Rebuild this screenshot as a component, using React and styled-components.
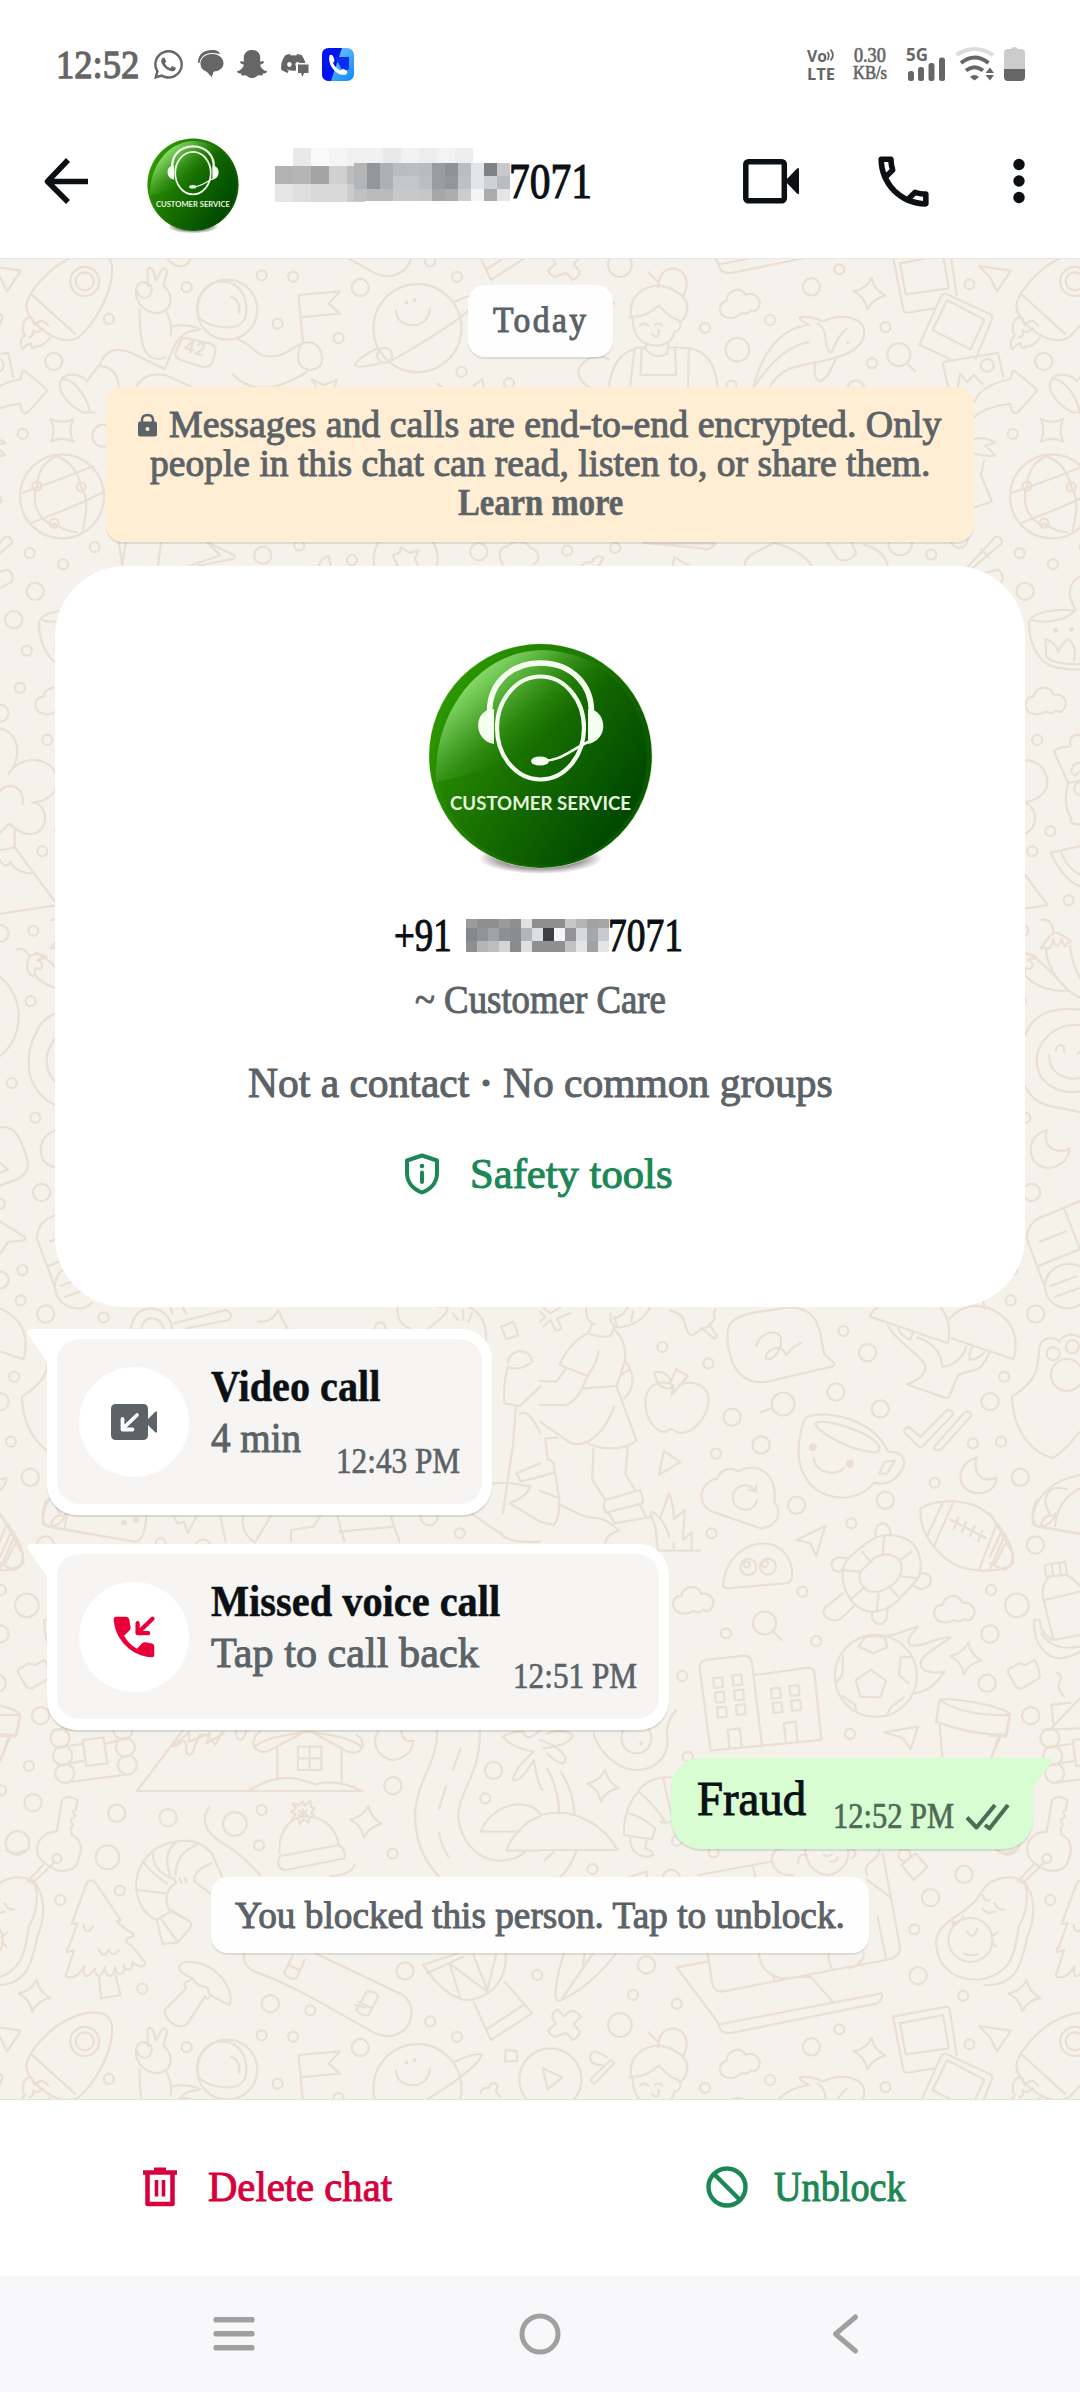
import React, { useLayoutEffect, useRef, useState } from 'react';
import styled, { createGlobalStyle } from 'styled-components';
import { FaWhatsapp, FaSnapchatGhost, FaDiscord } from 'react-icons/fa';
import { MdOutlineCall } from 'react-icons/md';

const colors = {
  ink: '#0b1014',
  muted: '#5b6368',
  status: '#666666',
  green: '#1b8755',
  red: '#d8003c',
  missed: '#ea0038',
  paper: '#f5f2eb',
  doodle: '#ebdfd3',
  outgoing: '#d8fdd2',
  notice: '#ffeed3',
  nav: '#f8f8fa',
  navIcon: '#a0a0a0',
};

const GlobalStyle = createGlobalStyle`
  * {
    box-sizing: border-box;
  }
  body {
    margin: 0;
    background: #fff;
    font-family: 'Liberation Serif', 'Times New Roman', serif;
    color: ${colors.ink};
  }
  svg {
    display: block;
    flex: none;
    overflow: visible;
  }
`;

/* ---------- text ---------- */

const TextBox = styled.span`
  display: block;
  flex: none;
  width: ${(p) => p.$width}px;
  height: ${(p) => p.$line}px;
  line-height: ${(p) => p.$line}px;
  font-size: ${(p) => p.$size}px;
  font-weight: ${(p) => (p.$bold ? 700 : 400)};
  color: ${(p) => p.$color || colors.ink};
  letter-spacing: ${(p) => p.$track || 0}px;
  -webkit-text-stroke: ${(p) => (p.$stroke === undefined ? 1 : p.$stroke)}px currentColor;
  white-space: pre;
`;

const TextInner = styled.span`
  display: inline-block;
  transform-origin: left center;
`;

// Squeezes a line of text so that it fills exactly the given width
const FitText = ({ width, size, line = size, color, bold, track, stroke, children }) => {
  const ref = useRef(null);
  const [scale, setScale] = useState(1);
  useLayoutEffect(() => {
    setScale(width / ref.current.offsetWidth);
  }, [width, children]);
  return (
    <TextBox
      $width={width}
      $size={size}
      $line={line}
      $color={color}
      $bold={bold}
      $track={track}
      $stroke={stroke}
    >
      <TextInner ref={ref} style={{ transform: `scaleX(${scale})` }}>
        {children}
      </TextInner>
    </TextBox>
  );
};

const Bullet = styled.span`
  font-size: 26px;
  line-height: 1;
  vertical-align: 5px;
  margin: 0 2px;
`;

/* ---------- wallpaper ---------- */

const S = 5;
const M = 8.6;
const L = 11.8;

const sheets = [
  {
    x: 0, y: 250, sx: 0.3444, sy: 0.3571,
    rings: [
      [760, 71, S], [851, 75, S], [542, 104, S], [1046, 105, M], [316, 193, S], [806, 206, S],
      [983, 247, S], [156, 312, M], [66, 515, S], [1340, 341, S], [1478, 373, S], [1249, 32, S],
      [1327, 75, S], [763, 855, M], [869, 828, S], [1022, 868, S], [1390, 845, M], [275, 832, S],
      [86, 849, S], [183, 880, S], [102, 956, M], [40, 1035, M], [78, 1122, S], [58, 1226, S],
      [137, 1372, S], [0, 1297, M], [246, 88, 14.5], [246, 88, 9], [660, 167, 30],
      [1212, 219, 44], [1117, 295, 7.5], [180, 690, 42], [107, 661, 4.5], [236, 664, 4.5],
      [157, 765, 4.5], [1178, 865, 32], [300, 520, 11],
    ],
    dots: [[1180, 147, 2], [1204, 141, 2]],
    sparks: [[180, 505, 45]],
    clouds: [],
    d: [
      'M150 240C110 220 70 180 78 148C85 115 140 55 190 30C240 5 325 -15 326 55C325 120 280 200 228 245Q195 262 150 240M92 125L218 235',
      'M82 190C60 200 65 230 72 240C55 250 60 270 65 278C80 260 90 262 90 262C90 275 100 280 103 268C115 275 135 260 145 245M82 190C100 185 95 205 100 210C110 200 125 190 140 212M85 245Q100 240 95 225Q110 235 125 220',
      'M397 135C388 110 400 90 415 90Q425 88 430 100L428 60C430 45 443 48 447 65L453 85L468 58C475 45 488 52 484 68L474 100C500 120 500 150 485 165C465 185 415 180 397 135M430 95C448 102 440 130 425 133C410 137 397 125 400 115',
      'M405 165C405 230 410 280 435 298Q460 312 480 300M485 175C495 200 500 215 495 240M495 215C530 208 560 212 582 222L545 230Q520 245 508 265L478 333L385 290C340 270 305 280 290 320L252 368C240 350 200 340 180 360C160 385 190 430 240 455L275 455M178 365C200 350 250 400 262 455M290 325C330 325 345 360 345 385M395 385C410 350 450 345 480 350L560 385',
      'M577 190C560 130 600 85 650 88C700 92 725 140 712 190C700 215 680 220 640 215C610 212 590 200 577 190M670 130C690 138 697 155 695 175',
      'M528 250Q532 245 545 248L610 262Q630 268 624 290L618 312Q610 330 590 328L525 308Q505 300 510 285Z',
      'M692 250C740 270 740 300 790 298C840 295 850 265 890 258M676 348C720 395 780 390 820 375C860 360 885 350 893 337M880 262C865 270 860 310 875 325C890 340 930 340 935 310C937 280 920 262 900 258ZL867 126L987 116L955 150L987 178L875 188M905 362L940 378L978 364L972 385M905 362L920 385M1270 375L1285 385M1375 380L1400 362L1405 385',
      'M1150 170C1152 225 1245 225 1248 165M1320 145C1350 130 1390 120 1397 125C1400 150 1300 220 1133 312M1097 275C1070 285 1040 305 1030 322C1035 330 1070 325 1100 318',
      'M65 680C120 660 200 635 270 605M90 765C150 740 220 720 295 680M105 665C90 720 120 760 155 770M107 660C110 620 130 590 170 575M235 660C225 620 200 590 165 578M236 665C260 700 250 740 240 785M157 765Q190 790 225 790',
      'M345 818L355 885L365 818M468 818L458 885M600 818L680 855Q685 862 675 865L575 885M600 818L640 855L550 885M1140 855L1160 848L1165 832L1190 848L1215 842L1205 865L1215 885M1140 855L1155 885M925 885Q935 860 955 857L960 885M1460 880C1440 850 1455 830 1475 830C1490 812 1530 812 1540 835C1568 840 1568 870 1550 880',
    ],
  },
  {
    x: 540, y: 250, sx: 0.3444, sy: 0.3571,
    rings: [
      [232, 42, L], [869, 54, S], [788, 103, M], [1247, 96, S], [668, 196, S], [479, 218, S],
      [573, 279, L], [1003, 216, S], [964, 317, S], [79, 842, S], [218, 834, S], [1046, 822, L],
      [1136, 853, S], [1217, 810, M], [556, 380, S], [917, 390, M], [1299, 323, 6.5], [1042, 293, 11.5],
    ],
    dots: [[893, 260, 1.7], [1497, 1065, 2.5], [1543, 1062, 2.5]],
    sparks: [[957, 122, 8]],
    clouds: [[578, 147, -12], [1468, 1262, 0]],
    d: [
      'M1275 45L1367 58L1327 116L1308 78Z',
      'M1262 425C1275 390 1320 370 1365 362L1372 340C1375 336 1380 340 1384 343L1440 388Q1445 393 1440 398L1390 452C1380 462 1370 455 1368 445L1365 430C1320 435 1280 450 1262 468',
      'M1240 890L1320 805C1330 798 1345 810 1340 822L1250 895M1280 838L1302 860M1290 905L1330 895Q1350 910 1340 930L1310 945',
      'M1425 1035C1430 1015 1500 1003 1555 1010M1425 1035C1450 1045 1530 1045 1555 1005C1530 970 1530 930 1575 910M1420 1040C1418 1090 1440 1140 1475 1160C1500 1175 1568 1178 1600 1172M1468 1090L1470 1140Q1500 1165 1580 1158M1468 1090Q1500 1100 1505 1125Q1515 1100 1535 1090Q1560 1110 1550 1150',
      'M1165 128Q1170 120 1180 123L1308 180Q1316 185 1312 195L1265 305M1165 128L1102 265L1190 305M1182 140L1290 195L1250 278L1140 225ZM1170 320L1185 385M1170 320Q1168 315 1180 312L1330 288L1345 355M1213 385L1220 345L1240 370L1260 350L1285 375',
      'M268 185C270 260 310 268 340 268C380 265 390 240 390 228C415 228 410 195 395 195M258 188Q310 190 345 155Q375 190 400 195M265 188C255 130 300 100 345 100C400 105 425 140 428 155C428 190 415 195 410 200M345 90C350 50 390 45 410 60C435 80 425 115 415 130M315 62L345 92L342 105M290 212Q300 200 315 212M332 210Q343 200 355 212M325 235Q345 255 345 225',
      'M312 260L305 275Q330 310 370 290L372 262M262 380L275 275L305 272M372 272L432 275L430 382M295 278L292 350H395L392 275M275 278Q215 290 200 380M432 275Q505 285 515 380M200 305C150 285 105 320 112 350Q125 380 145 383',
      'M620 385C640 300 690 220 780 210C760 200 750 190 755 188Q790 185 820 200C880 175 940 190 942 230C940 280 880 300 800 315C740 325 700 330 665 385M620 385Q700 270 780 258M805 205Q830 215 830 260Q840 300 850 280Q865 240 890 220M800 315Q790 360 815 368Q840 355 858 305M1065 318L1090 340',
      'M1262 530Q1290 520 1322 540L1290 548Q1310 560 1320 575Q1290 580 1262 570M1290 590L1280 630L1312 705L1262 720M300 820L510 822Q490 845 470 835L300 820M385 885L390 860L430 882M595 885Q590 860 640 840L680 820Q760 840 790 885M835 820L865 865Q890 880 918 850L905 820M940 825Q1000 840 1010 885M120 885Q130 870 150 875Q160 850 185 862L170 885',
    ],
  },
  {
    x: 0, y: 720, sx: 0.3333, sy: 0.3954,
    rings: [
      [127, 332, S], [100, 533, S], [92, 711, S], [35, 918, S], [106, 1006, S], [125, 1195, M],
      [67, 1391, S], [62, 1468, S], [137, 1502, M], [311, 1511, S], [0, 540, M], [0, 1223, S],
      [0, 1416, M],
    ],
    dots: [],
    sparks: [],
    clouds: [],
    d: [
      'M0 22C55 30 70 90 25 137C60 85 150 95 165 133Q182 160 160 185Q135 208 95 208C140 208 150 270 110 285C80 295 50 280 28 262L0 285M0 180C20 155 75 165 68 213M44 275L44 322L0 330M44 322L173 468L0 490M0 355Q15 380 32 358C35 375 70 390 102 388',
      'M52 580C75 575 80 590 90 598C75 615 80 645 100 648C110 640 100 625 110 628C130 635 135 610 112 608C120 600 140 605 140 600C120 588 100 590 90 598',
      'M105 795C85 830 75 890 105 927M0 650C75 700 75 800 0 850M0 1030C50 1025 60 1060 80 1105C95 1145 60 1160 40 1165L0 1178M0 1120L24 1137L0 1145M0 1268L75 1308Q78 1316 70 1316L25 1320L0 1350',
    ],
  },
  {
    x: 900, y: 620, sx: 0.3333, sy: 0.4464,
    rings: [[451, 473, S], [506, 628, S]],
    dots: [],
    sparks: [],
    clouds: [],
    d: [
      'M465 300C460 290 475 285 510 283M465 300L505 365C490 400 500 430 515 445M512 280C505 265 520 255 540 258M512 445C510 455 520 458 540 458M540 320C515 320 505 345 525 348L540 340M540 362C515 370 520 390 540 392M505 365L540 360',
      'M545 506L452 521C475 560 510 590 545 598M483 518C495 545 520 565 545 572M425 672C450 668 460 685 460 700M422 735C440 725 440 705 470 700C490 705 500 715 515 720L500 725Q495 740 485 715Q470 745 460 715Q455 740 440 735ZM438 738C440 780 490 830 545 848M510 730C515 760 530 790 545 808M375 745C400 750 440 775 505 830C460 835 400 820 375 795',
      'M375 930C400 880 460 865 545 873M375 1045C400 1080 440 1088 460 1090L545 1103M545 908C460 900 410 950 410 985C410 1040 480 1065 545 1055M448 975C445 1010 490 1035 545 1025M467 965C475 945 495 950 493 968M533 972L545 962',
      'M440 1143C400 1150 380 1180 400 1210C430 1240 500 1230 510 1183C490 1195 450 1190 440 1170Q435 1155 440 1143',
      'M380 1385C385 1350 410 1340 440 1333L545 1300M380 1385L435 1495M412 1448L545 1408M492 1318L538 1405M545 1450C500 1430 435 1450 435 1495C440 1540 510 1555 545 1530M420 1392L497 1370M452 1492L530 1470M465 1516L545 1495',
    ],
  },
  {
    x: 0, y: 1300, sx: 0.3444, sy: 0.3333,
    rings: [
      [41, 230, S], [32, 425, S], [88, 532, M], [0, 305, M], [132, 735, M], [78, 916, L],
      [3, 870, S], [0, 1002, M], [-8, 1150, M], [118, 1247, M], [466, 730, S], [590, 745, M],
      [1335, 700, S], [1246, 650, M], [1104, 82, S],
    ],
    dots: [[360, 668, 3], [395, 660, 3]],
    sparks: [],
    clouds: [],
    d: [
      'M380 85Q390 25 440 25Q490 30 500 85M410 85Q420 50 445 55Q470 60 475 85M500 40L495 20M540 40L530 20M505 70L655 30Q680 40 665 60L540 85M750 65Q790 70 808 30Q820 60 835 85M1155 20Q1150 70 1190 85M1270 20Q1340 10 1245 85M1360 20Q1420 50 1410 130M1315 40L1330 60M1345 30V60M1370 40L1360 65',
      'M1455 80L1490 65L1505 105L1470 118ZM1475 190Q1475 165 1500 155Q1540 150 1545 185M1475 200Q1500 215 1540 190M1475 200Q1460 250 1465 310L1510 318L1568 260M1498 320L1490 430L1460 640M1510 340Q1540 330 1568 400M1568 490L1500 520L1512 545L1568 530M1432 550Q1480 545 1540 560Q1530 590 1480 610L1568 665M1370 640Q1420 680 1455 700Q1470 730 1568 725',
      'M135 600Q110 660 140 680L390 725Q420 725 425 650M150 680Q185 670 190 640M505 650L515 670L535 665L545 700L570 650M640 650L655 725M705 650Q700 700 740 728L785 650M845 725V690L910 680L930 650M980 650L1000 725M985 695L1145 680M1135 650L1160 725M0 640L65 760Q70 800 40 810L0 790M0 770L35 690M15 790L50 720',
      'M500 1340L550 1295L548 1325L610 1300L600 1330L650 1300M740 1345Q745 1315 895 1295Q1040 1315 1050 1345',
    ],
  },
  {
    x: 540, y: 1250, sx: 0.3444, sy: 0.3333,
    rings: [
      [355, 291, S], [489, 340, S], [881, 243, S], [951, 308, M], [859, 426, M], [988, 477, M],
      [558, 502, M], [642, 585, M], [511, 611, S], [1257, 580, S], [1146, 698, S], [1003, 751, M],
      [745, 766, M], [904, 820, S], [498, 850, S], [762, 1025, S], [540, 1150, S], [802, 1173, S],
      [413, 1278, S], [900, 1452, S], [706, 462, 11.5], [652, 1119, 11.5], [1490, 311, 6.5],
      [1546, 290, 6.5], [1530, 375, 16], [605, 951, 8], [662, 950, 8], [975, 1278, 41],
      [600, 943, 3], [653, 942, 3],
    ],
    dots: [[792, 592, 4], [900, 641, 4]],
    sparks: [[1237, 1225, 8]],
    clouds: [[445, 1050, 0], [1203, 1077, 0]],
    d: [
      'M958 200Q965 180 985 168M958 200L1185 280C1195 230 1180 190 1160 168M1190 205C1240 150 1310 160 1355 210C1385 245 1385 290 1375 328L1195 265M1285 148L1292 175',
      'M1010 228C1040 280 1100 310 1118 345C1125 375 1090 395 1065 403L1175 443Q1185 445 1190 435L1212 380C1225 360 1260 370 1280 350Q1300 325 1303 308M1040 235Q1050 260 1075 268L1083 248M1095 262C1120 270 1140 285 1150 300C1165 320 1165 330 1168 350C1200 350 1230 320 1238 290M1255 290Q1245 310 1248 330Q1280 325 1290 305',
      'M1370 440C1375 560 1440 610 1488 625C1530 600 1545 570 1568 545M1370 440C1450 390 1445 350 1450 290C1455 265 1490 255 1508 275C1520 250 1550 250 1568 262',
      'M382 435L388 405C350 385 310 405 306 450C303 510 340 550 365 545Q385 530 395 545C430 560 480 520 490 455C492 410 450 385 405 405M332 366Q380 360 382 415Q340 420 332 366M382 390L395 358L430 378L382 435',
      'M548 230C560 200 600 190 640 185L720 172C790 172 805 210 815 255L825 312L850 335Q860 345 848 350L680 390C630 405 590 395 565 350C545 310 540 260 548 230M628 288C640 240 700 235 700 270C700 310 670 335 655 325C655 300 690 285 705 300L715 315L735 292L757 280',
      'M378 180C390 190 405 185 415 205L430 250Q440 260 455 248L470 235L490 230L508 205Q500 190 512 178M470 235L505 265Q515 265 512 255L490 222M0 185L15 200L0 215M10 175L30 190L60 172M88 190L50 205L62 235Q50 245 45 240L30 210L10 230',
      'M135 172Q130 215 160 222M150 225L140 250Q175 265 205 258L215 235M205 190Q200 225 225 232C270 230 300 210 320 172M215 205Q240 200 255 172M225 232L215 200M265 215L270 185M140 250C100 265 65 320 58 345L138 378Q165 340 170 305M215 238C250 270 250 310 245 340L222 408L122 416L138 378M122 416C110 440 90 465 70 465L0 465M75 355L48 395L0 393',
      'M222 408L280 572C240 605 170 600 130 575M0 515L90 580Q130 590 165 555C190 530 205 500 215 470M250 335Q290 400 245 445M235 375L258 360M155 595L152 690L190 750M255 592L248 672L275 718M190 750L290 720Q300 740 298 760L192 788Q180 770 190 750M200 790L218 820L325 800M290 765L308 800M50 563L15 565L22 628Q42 630 42 660L55 740Q60 800 40 825L0 815M60 765C110 790 130 805 170 805C200 810 215 830 230 842Q190 855 190 880M0 680L40 668M0 722L55 745',
      'M320 790L335 830L342 902L465 902M325 785Q360 805 375 860M350 800L375 730Q390 770 388 808L420 780L415 870L440 848L440 902M388 880V902M360 603L345 675L407 636ZM640 487L674 475M677 1145L702 1170',
      'M780 498C850 480 950 515 990 570L1012 605C1050 605 1070 630 1050 660C1030 700 1000 705 970 698C930 750 870 745 850 740C770 720 745 650 752 580C760 530 765 500 780 498M800 520C820 500 960 545 985 590C990 610 970 610 940 602C880 590 800 540 800 520M1000 635L1030 632L1008 670L985 672ZM795 625C800 670 860 680 882 655',
      'M1070 530Q1052 538 1060 550L1098 588Q1105 595 1112 588L1198 495Q1200 478 1182 480L1105 560ZM1145 590L1232 488Q1250 478 1252 498L1165 598Q1145 608 1145 590',
      'M515 685C525 655 560 650 575 665C640 630 690 680 680 755C705 790 690 830 640 835L500 785C450 760 465 695 515 685M625 720C590 690 560 715 560 745C565 790 625 790 630 750M605 720L627 725L628 708',
      'M828 828L745 870L785 880L802 918ZM1000 1447L1098 1430L1076 1498L1055 1465ZM1270 622C1220 635 1205 690 1240 720C1280 745 1325 720 1325 683Q1285 700 1268 665Q1260 640 1270 622',
      'M1105 775C1150 745 1250 745 1300 790C1350 840 1375 890 1375 940C1340 970 1240 970 1190 935C1130 890 1100 830 1105 775M1168 762L1125 855M1198 762L1145 885M1325 825L1275 958M1350 855L1305 962M1190 808L1295 865M1215 803L1203 835M1238 815L1225 845M1262 828L1248 858M1285 842L1272 872',
      'M1568 675C1480 690 1430 750 1430 820Q1435 828 1450 830L1568 852M1495 830C1500 780 1520 740 1568 715M1455 825C1460 800 1480 790 1495 800M1480 790C1450 740 1480 700 1530 718',
      'M532 1000C540 920 600 880 650 880C710 880 735 940 732 980Q730 1000 710 1000L545 1015Q528 1012 532 1000',
      'M935 890C980 850 1010 850 1050 862C1110 880 1115 960 1095 990L1040 1050C1000 1090 950 1100 910 1060C870 1010 870 950 900 920ZM935 960L970 925C1010 900 1060 920 1048 965C1040 1000 1000 1030 960 1025C930 1015 920 980 935 960M1000 860L995 910M1078 905L1040 935M1095 985L1045 978M1040 1040L1012 1008M978 1085L983 1030M905 1045L945 1010M875 960L928 965M935 905L962 938',
      'M975 860C965 810 1020 805 1018 858M875 965C840 970 835 925 870 922L900 925M1105 970C1145 965 1145 1015 1105 1018L1080 1005M880 1030L830 1070C805 1095 850 1125 875 1105L912 1068M965 1085C955 1120 1000 1140 1007 1100L1010 1078',
      'M1000 1158C1040 1155 1060 1140 1097 1130C1080 1150 1060 1175 1075 1185C1110 1195 1150 1160 1192 1162C1160 1190 1110 1210 1105 1240C1105 1270 1150 1270 1175 1265C1150 1300 1130 1325 1085 1330M960 1260L1005 1292L988 1342L930 1340L917 1290ZM925 1190L945 1160H1000L1008 1192L968 1210ZM1080 1222L1048 1220L1042 1275L1070 1300M880 1218L878 1275L860 1298M878 1338L915 1365L918 1385M1010 1388L1020 1370L1058 1342',
      'M495 1498L463 1250Q465 1235 480 1230L595 1217Q612 1218 615 1235L645 1490M625 1275L780 1253Q795 1255 797 1270L817 1470L495 1502M545 1440L580 1435L585 1490M545 1440L550 1495M708 1420L742 1415L748 1475M708 1420L714 1478',
      'M1160 1350C1190 1340 1360 1370 1365 1395L1355 1455Q1250 1455 1150 1415L1160 1350Q1230 1400 1365 1395M1160 1420L1168 1520M1338 1457L1310 1525',
      'M1360 1270Q1355 1255 1375 1250L1390 1240L1410 1245L1435 1230Q1445 1240 1450 1270Q1455 1285 1440 1290L1400 1315Q1385 1318 1380 1305ZM1465 945L1525 935L1530 975L1470 980ZM1485 942L1490 978M1508 940L1512 975M1475 985C1455 1010 1458 1040 1462 1050L1490 1165M1530 975Q1555 990 1568 1010M1465 1050L1568 1025M1568 1155L1490 1170Q1450 1150 1452 1110H1435C1430 1180 1470 1225 1510 1225Q1545 1220 1568 1205M1455 1150Q1490 1205 1568 1190M1500 1268Q1520 1275 1508 1300Q1500 1315 1522 1340M1540 1358L1485 1365L1490 1420M1480 1440L1568 1345M1460 1440L1568 1435',
    ],
    squares: [
      [517, 1298], [573, 1290], [522, 1342], [578, 1335], [528, 1387], [583, 1379],
      [685, 1330], [739, 1322], [690, 1373], [744, 1366],
    ],
  },
  {
    x: 0, y: 1720, sx: 0.3444, sy: 0.3333,
    rings: [
      [84, 138, S], [3, 211, S], [96, 248, M], [339, 280, M], [488, 293, M], [51, 369, L],
      [682, 312, L], [760, 270, S], [752, 376, S], [1141, 197, M], [1140, 401, S], [1409, 235, S],
      [1433, 151, M], [312, 412, L], [348, 512, S], [175, 540, S], [413, 806, S], [785, 851, M],
      [901, 871, S], [1176, 753, M], [1560, 765, S], [174, 55, 9.5], [182, 107, 9.5],
      [188, 160, 9.5], [357, 30, 9.5], [364, 82, 9.5], [370, 135, 9.5], [165, 416, 4.5],
      [840, 490, 5], [1000, 665, 5],
    ],
    dots: [],
    sparks: [[100, 827, 8], [1063, 305, 8]],
    clouds: [],
    d: [
      'M240 60L300 52L312 130L250 138ZM195 78L238 72M200 130L250 122M195 187L372 163M305 72L340 62M0 125L25 50M0 48L45 50L55 0',
      'M530 32L398 213H1053M500 78Q515 80 530 62Q545 65 540 95Q555 120 565 80L580 45Q600 40 610 55L625 75L645 35M685 32Q685 60 700 60Q712 50 715 32M805 82V180M992 82V185M722 213Q800 160 870 178Q895 185 915 193Q980 175 1050 213M755 35Q730 55 738 80Q755 105 785 90L895 30L1010 95Q1045 105 1053 78Q1055 55 1035 45M865 80H933V150H865ZM899 80V150M865 115H933',
      'M1165 32Q1170 70 1200 62C1200 100 1160 125 1130 118C1090 105 1080 60 1098 35M1268 32C1275 120 1210 180 1205 280C1205 380 1240 430 1275 470M1393 32C1400 150 1330 220 1330 290C1340 380 1400 420 1445 422C1500 420 1515 405 1525 395M1337 85L1315 150M1295 200L1275 265M1275 338Q1280 375 1303 412',
      'M1568 30Q1530 70 1520 35M1520 35Q1480 35 1460 50Q1480 80 1550 95Q1490 150 1490 180Q1510 190 1550 120Q1560 190 1575 210M1395 335C1430 250 1530 230 1568 280M1395 335H1510M1470 392C1490 340 1530 300 1568 290M1470 392H1568',
      'M185 235Q200 225 225 240L220 270L212 275L218 290L205 300L212 315L205 325L208 345C235 355 240 390 230 410C225 450 200 455 170 452C140 440 105 420 108 385C110 350 140 335 165 335L180 240M160 425L95 490L78 475M125 435L80 485',
      'M262 482Q270 478 280 492L350 600L340 605Q365 630 385 640Q395 650 370 655Q360 670 380 675L420 725Q425 735 410 740Q390 735 385 725Q385 750 372 750Q360 745 360 735Q365 760 350 762Q335 760 335 740Q330 770 315 768Q305 760 305 740Q295 770 285 768Q275 760 275 745Q260 770 248 768Q240 760 245 740Q225 775 200 772Q185 770 195 755L215 690L195 697Q190 690 200 680L225 610L208 612L250 495Q255 482 262 482M288 770L293 835L350 825L335 765M242 615Q250 650 270 620M285 685Q300 720 315 690Q330 715 345 690',
      'M645 470L615 400C590 370 555 355 510 365C440 375 395 430 395 500C400 560 430 590 455 600L495 575C470 540 490 500 510 490M565 485Q560 450 615 430M565 485L610 520M415 425Q440 460 485 490M445 400Q440 450 500 475M510 368Q470 400 495 470M570 375Q510 400 510 465M400 510L480 520M455 600L472 672L515 668L552 625Q560 605 545 600L497 570M470 600L515 665M497 575L552 605M505 475L512 490M520 475L528 490M537 475L542 488',
      'M607 262C580 300 600 340 640 365Q700 400 755 465M812 400C805 330 850 290 880 290C940 285 980 330 983 375M815 408L985 375Q1005 390 1000 415L830 450Q805 450 808 420ZM960 468Q1020 465 1030 433',
      'M880 245L884 258L902 242V260L914 265L903 278L914 290L898 292L896 308L882 298L870 312L865 294L848 300L858 282L845 275L860 266L850 250L868 256ZM880 268V290M868 285L892 272M868 272L892 286',
      'M520 740C530 715 590 725 620 750C670 790 675 840 665 855L610 825Q605 845 595 830L545 910C520 935 475 900 478 870Q495 855 540 805L535 790L560 775Q520 760 520 740M560 775Q570 800 600 800L610 825',
      'M708 700Q705 740 740 755Q830 790 900 830L1080 935C1140 970 1200 930 1195 870Q1190 830 1150 815L915 700M850 705L825 760Q840 780 860 775L885 720M835 735L870 750M1065 815L1035 870Q1050 890 1070 885L1098 830Q1090 810 1065 815M1040 845L1080 865M1030 855L1060 862',
      'M1228 735L1250 765Q1300 830 1350 840C1420 840 1475 780 1468 700M1228 735L1330 700M1240 760L1345 710M1335 830L1305 730L1415 815M1375 705L1415 810L1440 705M1375 845L1425 960L1545 880L1465 785M1410 930L1520 855M1468 990L1500 993L1502 1022L1466 1025ZM1395 1120Q1400 1100 1420 1105Q1425 1080 1445 1095L1440 1115L1452 1130',
    ],
  },
  {
    x: 540, y: 1720, sx: 0.3444, sy: 0.3333,
    rings: [
      [152, 447, S], [381, 475, M], [398, 362, S], [504, 397, S], [429, 110, S], [309, 735, M],
      [270, 825, S], [397, 851, S], [1231, 463, M], [1134, 533, M], [1087, 628, S], [1098, 767, M],
      [1229, 827, S], [280, 55, 15], [1250, 660, 22], [30, 1078, 31], [1058, 405, 6],
    ],
    dots: [[294, 70, 2]],
    sparks: [[183, 197, 8]],
    clouds: [],
    d: [
      'M0 60Q60 80 75 115Q70 150 20 100M20 40Q70 25 95 45Q90 75 10 85M20 145C45 190 55 230 55 280M60 155Q95 210 100 280M0 285Q40 275 80 280C150 295 200 340 225 390L0 390M105 395Q90 440 60 470M40 395L15 420',
      'M310 455C320 560 220 760 60 842Q45 845 45 825C50 700 130 500 310 455M65 835L200 630M125 740L135 650',
      'M380 172C330 170 300 190 285 215C255 250 240 300 245 345L325 358M285 215Q330 250 365 308M255 280Q290 285 335 325L325 358M262 355C260 400 300 420 330 405Q325 390 305 385L310 360M358 178L385 300Q370 315 350 305',
      'M155 40C170 90 220 150 280 150C350 150 380 90 368 40Q370 0 395 -30',
      'M1400 480C1350 460 1300 480 1280 520C1240 590 1150 600 1150 670C1155 760 1230 785 1280 778C1380 760 1380 680 1390 620C1425 560 1415 490 1400 480C1440 520 1440 590 1415 650C1400 720 1390 800 1290 795M1285 525Q1290 545 1305 540M1320 550Q1330 572 1348 568M1285 565Q1295 585 1320 575M1240 635Q1258 665 1270 625M1230 700Q1250 710 1270 702M1310 650L1328 638M1312 665L1325 680M1200 620L1198 605L1215 608M1225 600L1228 588',
      'M40 875L52 868L70 890L90 872Q110 875 118 890L98 912L115 935Q115 950 95 960L75 938L45 950Q25 945 25 930L45 912L35 890Z',
      'M485 725L397 742L515 905L525 930Q535 942 560 938L980 850Q995 840 993 820L525 912M785 770L850 845M850 750L1005 720Q1050 710 1045 680L995 400M455 480L500 790Q505 815 530 815L850 750Q835 720 838 700M680 785L678 770M460 465L670 425M618 438L625 470M635 700Q640 760 700 775L785 770M940 700Q940 730 900 745M770 385C770 440 810 465 835 465C880 460 900 420 895 385M735 465C690 470 660 430 680 395Q690 385 705 385M750 430Q745 400 775 405M900 385Q930 400 905 415M950 465C930 420 990 430 985 380M950 480L1015 530M980 590Q990 640 1005 718M825 405Q835 415 848 402M845 425Q860 425 865 412',
      'M1050 435L1090 400L1125 440L1085 480ZM1325 390Q1350 410 1380 390',
      'M1145 1045L1070 1058Q1060 1060 1055 1050L1025 890L1180 860Q1188 860 1190 870L1210 1005M1045 910L1170 885L1187 985L1062 1003ZM8 1045L65 1072L22 1108ZM150 1075L205 1020L215 1030L160 1090Q145 1088 150 1075M195 1012Q150 980 145 1010Q145 1035 180 1035',
    ],
  },
];

const CLOUD =
  'M-17 11C-23 5 -20 -4 -12 -4C-10 -14 4 -17 8 -6C16 -8 23 0 19 7C17 12 13 12 10 10C6 14 2 12 0 11C-5 14 -11 15 -17 11Z';
const SPARK = 'M0 -16Q4 -4 16 0Q4 4 0 16Q-4 4 -16 0Q-4 -4 0 -16Z';

const tiles = [
  [0, 0], [990, 0], [-990, 0], [0, -1760], [990, -1760], [0, 1760], [990, 1760], [-990, 1760],
];

const WallpaperSvg = styled.svg`
  position: absolute;
  inset: 0;
  z-index: 0;
  fill: none;
  stroke: ${colors.doodle};
  stroke-width: 2.2;
  stroke-linecap: round;
  stroke-linejoin: round;

  path {
    vector-effect: non-scaling-stroke;
  }
`;

const Wallpaper = () => (
  <WallpaperSvg width='1080' height='1842' viewBox='0 259 1080 1842' aria-hidden='true'>
    <defs>
      <g id='doodles'>
        {sheets.map((s, n) => {
          const at = (x, y, rot) =>
            `translate(${s.x + x * s.sx} ${s.y + y * s.sy}) rotate(${rot || 0})`;
          return (
            <g key={n}>
              <g transform={`translate(${s.x} ${s.y}) scale(${s.sx} ${s.sy})`}>
                {s.d.map((d) => (
                  <path key={d} d={d} />
                ))}
              </g>
              {s.rings.map(([x, y, r]) => (
                <circle key={`${x}-${y}-${r}`} r={r} transform={at(x, y)} />
              ))}
              {s.dots.map(([x, y, r]) => (
                <circle key={`${x}-${y}`} r={r} fill={colors.doodle} stroke='none' transform={at(x, y)} />
              ))}
              {s.sparks.map(([x, y, rot]) => (
                <path key={`${x}-${y}`} d={SPARK} transform={at(x, y, rot)} />
              ))}
              {s.clouds.map(([x, y, rot]) => (
                <path key={`${x}-${y}`} d={CLOUD} transform={at(x, y, rot)} />
              ))}
              {(s.squares || []).map(([x, y]) => (
                <rect key={`${x}-${y}`} x='-4.5' y='-5' width='9' height='10' transform={at(x, y, -5)} />
              ))}
            </g>
          );
        })}
        <text
          transform='translate(183 351) rotate(14)'
          fill={colors.doodle}
          strokeWidth='0.6'
          fontFamily='Inter, sans-serif'
          fontSize='17'
        >
          42
        </text>
      </g>
    </defs>
    {tiles.map(([x, y]) => (
      <use key={`${x}/${y}`} href='#doodles' x={x} y={y} />
    ))}
  </WallpaperSvg>
);

/* ---------- avatar ---------- */

const ServiceAvatar = ({ width, height, id }) => (
  <svg width={width} height={height} viewBox='0 0 225 230' preserveAspectRatio='none'>
    <defs>
      <linearGradient id={`${id}-body`} x1='0' y1='0.25' x2='0.85' y2='0.8'>
        <stop offset='0' stopColor='#2c9a00' />
        <stop offset='0.4' stopColor='#1c7600' />
        <stop offset='1' stopColor='#004a00' />
      </linearGradient>
      <linearGradient id={`${id}-gloss`} x1='0.08' y1='0.2' x2='0.62' y2='0.62'>
        <stop offset='0' stopColor='#a0f282' />
        <stop offset='0.5' stopColor='#4aa42c' />
        <stop offset='1' stopColor='#1d7600' stopOpacity='0' />
      </linearGradient>
      <linearGradient id={`${id}-rim`} x1='0' y1='0' x2='0.9' y2='0.5'>
        <stop offset='0.1' stopColor='#2f9c00' />
        <stop offset='0.7' stopColor='#1b7300' />
        <stop offset='1' stopColor='#0a5a00' />
      </linearGradient>
      <radialGradient id={`${id}-shadow`}>
        <stop offset='0.5' stopColor='#6e6068' />
        <stop offset='1' stopColor='#6e6068' stopOpacity='0' />
      </radialGradient>
    </defs>
    <ellipse cx='112.5' cy='215' rx='62' ry='16' fill={`url(#${id}-shadow)`} />
    <ellipse cx='112.5' cy='113' rx='112' ry='112.5' fill='#d5eccc' />
    <ellipse cx='112.5' cy='113' rx='111.3' ry='112' fill={`url(#${id}-rim)`} />
    <ellipse cx='113' cy='114.5' rx='106' ry='108' fill={`url(#${id}-body)`} />
    <path d='M8 139C5 70 50 9 113 7C150 8 178 22 196 46C150 60 110 120 8 139Z' fill={`url(#${id}-gloss)`} />
    <g fill='none' stroke='#f4fff0' strokeLinecap='round'>
      <path d='M62 76C58 42 82 20 112.500 20C143 20 167 42 163 76' strokeWidth='5.5' />
      <ellipse cx='112.500' cy='85' rx='43.500' ry='51.500' strokeWidth='4.200' />
      <path d='M112 118C132 119 142 107 162 98' strokeWidth='2.600' />
    </g>
    <g fill='#f4fff0'>
      <ellipse cx='112' cy='118' rx='9' ry='4.500' />
      <path d='M66 66V101C46 97 46 72 60 67ZM160 66V101C180 97 179 72 165 67Z' />
    </g>
    <text
      x='22'
      y='167'
      textLength='181'
      lengthAdjust='spacingAndGlyphs'
      fontFamily='Lato, sans-serif'
      fontWeight='700'
      fontSize='19.5'
      fill='#e6f4df'
    >
      CUSTOMER SERVICE
    </text>
  </svg>
);

/* ---------- hidden part of the number ---------- */

const headerCells = [
  [18, 0, 18, 19, ['#e9e9ea', '#fafafa', '#f5f5f5', '#f0f0f0', '#f1f1f2', '#e9e9eb', '#f2f2f3', '#ededee', '#f3f3f3', '#eeeeef']],
  [0, 18, 18, 19, ['#b3b3b4', '#b5b5b6', '#a3a4a5', '#d0d0d1', '#bcbdbe']],
  [0, 36, 18, 18, ['#e6e6e8', '#dedee0', '#d9d9da', '#d9d9da', '#cccccd']],
  [79, 15, 13, 13, ['#b3b5b7', '#949698', '#aeb0b3', '#babcbe', '#bbbdc0', '#b9bbbd', '#9a9c9e', '#909294', '#bbbdbf', '#e4e5e7', '#808284', '#c8c9cb']],
  [79, 28, 13, 13, ['#b3b5b7', '#949698', '#aeb0b3', '#c4c6c8', '#c4c6c8', '#bcbec0', '#9a9c9e', '#949698', '#bfc1c3', '#e4e5e7', '#cfd1d3', '#babcbe']],
  [79, 41, 13, 12, ['#bfc1c3', '#b8babc', '#b8babc', '#c6c8ca', '#c6c8ca', '#c4c6c8', '#a5a7a9', '#abadaf', '#cbcdcf', '#f4f4f4', '#a9abad', '#e4e5e7']],
];

const cardCells = [
  [0, 0, 11, 9, ['#999b9c', '#8d8f91', '#8d8f91', '#999b9c', '#8d8f91', '#e0e1e3', '#8d8f91', '#8d8f91', '#8d8f91', '#c5c7c9', '#b3b5b7', '#a0a2a4', '#a3a5a7']],
  [0, 9, 11, 13, ['#85878a', '#919395', '#a0a2a4', '#8d8f91', '#8a8c8f', '#b3b5b7', '#dedfe1', '#3c4043', '#f5f5f7', '#919395', '#d8d9db', '#a5a7a9', '#c8cacc']],
  [0, 22, 11, 11, ['#8d8f91', '#b3b5b7', '#bcbec0', '#d4d5d7', '#898b8e', '#dedfe1', '#8d8f91', '#8d8f91', '#8d8f91', '#c0c2c4', '#e4e5e7', '#a0a2a4', '#e4e5e7']],
];

const Mosaic = ({ width, height, rows }) => (
  <svg width={width} height={height} shapeRendering='crispEdges' aria-hidden='true'>
    {rows.map(([x, y, w, h, fills], r) =>
      fills.map((fill, i) => (
        <rect key={`${r}-${i}`} x={x + i * w} y={y} width={w} height={h} fill={fill} />
      ))
    )}
  </svg>
);

/* ---------- status bar ---------- */

const StatusRow = styled.div`
  height: 128px;
  padding: 0 55px 0 56px;
  display: flex;
  align-items: center;
  justify-content: space-between;
  color: ${colors.status};
`;

const StatusSide = styled.div`
  display: flex;
  align-items: center;
  gap: ${(p) => p.$gap}px;
`;

const StackedLabel = styled.div`
  display: flex;
  flex-direction: column;
  align-items: center;
  margin: 0 10px 0 8px;
`;

const StatusBar = () => (
  <StatusRow>
    <StatusSide $gap={13}>
      <FitText width={83} size={41} line={44} color={colors.status} stroke={1.3}>
        12:52
      </FitText>
      <FaWhatsapp size={33} />
      <svg width='26' height='28' viewBox='0 0 26 28' fill='currentColor'>
        <path d='M0 13C0 3 7 0 14 0H17Q21 1 22 4Q10 2 5 6Q2 9 2 13Z' />
        <path
          d='M14 3.500C21 3.500 26 8 26 13.500C26 18 21 22 16 22L14 28L8.500 22C5 21 2 17.500 2 13.500C2 8.500 7 3.500 14 3.500Z'
          stroke='#fff'
          strokeWidth='1'
        />
      </svg>
      <FaSnapchatGhost size={30} />
      <svg width='29' height='29' viewBox='0 0 29 29'>
        <FaDiscord size={27} y={0} x={0} />
        <path d='M16 13H30V26H16Z' fill='#fff' />
        <path d='M18 14.500H28.500V23H24L22.500 27L21 23H18Z' fill='currentColor' />
      </svg>
      <svg width='32' height='33' viewBox='0 0 32 33'>
        <defs>
          <linearGradient id='dialer' x1='0' y1='0' x2='1' y2='1'>
            <stop offset='0' stopColor='#8cd2ff' />
            <stop offset='1' stopColor='#0d86f5' />
          </linearGradient>
        </defs>
        <rect width='32' height='33' rx='7' fill='url(#dialer)' />
        <path d='M7 0H20L9 33H7Q0 33 0 26V7Q0 0 7 0Z' fill='#0014f0' />
        <path d='M13 9H27V20Q27 22 25 22H20Z' fill='#0a2bf0' />
        <path
          d='M7.500 7.500Q9 6 11 8L12.500 12Q12.500 13.500 11 15Q13 20 18.500 22.500L20.500 21Q22 20.500 25 23Q26 25 24 26.500C16 29 5 18 7.500 7.500Z'
          fill='#fff'
        />
      </svg>
    </StatusSide>
    <StatusSide $gap={9}>
      <svg width='29' height='34' viewBox='0 0 29 34' fill='currentColor'>
        <text x='0' y='14.500' fontFamily='Open Sans, sans-serif' fontWeight='700' fontSize='16.500' textLength='20' lengthAdjust='spacingAndGlyphs'>Vo</text>
        <text x='0' y='33' fontFamily='Open Sans, sans-serif' fontWeight='700' fontSize='16.500' textLength='28' lengthAdjust='spacingAndGlyphs'>LTE</text>
        <path d='M20.500 5Q23 9 20.500 13M23.500 2.500Q28.500 8 23.500 13.500' fill='none' stroke='currentColor' strokeWidth='1.700' />
      </svg>
      <StackedLabel>
        <FitText width={32} size={21} line={18} color={colors.status} stroke={0.7}>
          0.30
        </FitText>
        <FitText width={34} size={19} line={18} color={colors.status} stroke={0.7}>
          KB/s
        </FitText>
      </StackedLabel>
      <svg width='40' height='34' viewBox='0 0 40 34' fill='currentColor'>
        <text x='0' y='13.500' fontFamily='Open Sans, sans-serif' fontWeight='700' fontSize='17.500' textLength='22' lengthAdjust='spacingAndGlyphs'>5G</text>
        <rect x='2' y='24' width='6' height='10' rx='2.500' />
        <rect x='12' y='20' width='6' height='14' rx='2.500' />
        <rect x='22.500' y='16' width='6' height='18' rx='2.500' />
        <rect x='33' y='10.500' width='6' height='23.500' rx='2.500' />
      </svg>
      <svg width='40' height='34' viewBox='0 0 40 34' fill='none' stroke='currentColor' strokeWidth='4'>
        <path d='M1.500 8Q19.500 -4 38 8' stroke='#dcdcdc' />
        <path d='M6 16Q19.500 5 33.500 16' />
        <path d='M11 23.500Q19.500 17 28 23.500' />
        <path d='M15 30Q19.500 26 24 30L19.500 33.500Z' fill='currentColor' stroke='none' />
        <path d='M30.500 26L35 20.500L39 26ZM30.500 28L35 33.500L39 28Z' fill='currentColor' stroke='none' />
      </svg>
      <svg width='21' height='34' viewBox='0 0 21 34'>
        <path d='M4 2H7Q8 0 10.500 0Q13 0 14 2H17Q21 2 21 6V22H0V6Q0 2 4 2Z' fill='#cccccc' />
        <path d='M0 22H21V30Q21 34 17 34H4Q0 34 0 30Z' fill='currentColor' />
      </svg>
    </StatusSide>
  </StatusRow>
);

/* ---------- header ---------- */

const HeaderRow = styled.header`
  height: 130px;
  padding: 0 55px 24px 44px;
  display: flex;
  align-items: center;
`;

const Spacer = styled.div`
  flex: ${(p) => (p.$size ? 'none' : 1)};
  width: ${(p) => p.$size || 0}px;
`;

const HeaderAvatar = styled.div`
  margin-top: 8px;
`;

const NumberRow = styled.div`
  display: flex;
  align-items: center;
`;

const HeaderMosaic = styled.div`
  margin-top: -12px;
`;

const Header = () => (
  <HeaderRow>
    <svg width='45' height='46' viewBox='0 0 45 46' fill='none' stroke={colors.ink} strokeWidth='5.500'>
      <path d='M44 23.500H4M24 2L3.500 23.500L24 44' strokeLinejoin='round' />
    </svg>
    <Spacer $size={58} />
    <HeaderAvatar>
      <ServiceAvatar id='small' width={92} height={95} />
    </HeaderAvatar>
    <Spacer $size={36} />
    <NumberRow>
      <HeaderMosaic>
        <Mosaic width={234} height={54} rows={headerCells} />
      </HeaderMosaic>
      <FitText width={83} size={51} line={58} stroke={1.2}>
        7071
      </FitText>
    </NumberRow>
    <Spacer />
    <svg width='57' height='46' viewBox='0 0 57 46'>
      <rect x='2.800' y='3.800' width='38.500' height='39' rx='2.500' fill='none' stroke={colors.ink} strokeWidth='5.500' />
      <path d='M42 23L54 10.500Q56 9 56 12V35Q56 37 54 35.500Z' fill={colors.ink} />
    </svg>
    <Spacer $size={70} />
    <MdOutlineCall size={67} color={colors.ink} />
    <Spacer $size={76} />
    <svg width='12' height='46' viewBox='0 0 12 46' fill={colors.ink}>
      <circle cx='6' cy='6.500' r='5.700' />
      <circle cx='6' cy='23' r='5.700' />
      <circle cx='6' cy='39.500' r='5.700' />
    </svg>
  </HeaderRow>
);

/* ---------- chat ---------- */

const Chat = styled.main`
  position: relative;
  height: 1842px;
  overflow: hidden;
  background: ${colors.paper};
  border-top: 1px solid #e9e8e3;
  border-bottom: 1px solid #e2e4df;
`;

const Thread = styled.div`
  position: relative;
  z-index: 1;
  display: flex;
  flex-direction: column;
  align-items: center;
  padding-top: 26px;
`;

const Chip = styled.div`
  width: ${(p) => p.$width}px;
  height: ${(p) => p.$height}px;
  border-radius: 17px;
  background: rgba(255, 255, 255, 0.92);
  box-shadow: 0 1.5px 1px rgba(11, 20, 26, 0.1);
  display: flex;
  align-items: center;
  justify-content: center;
`;

const Notice = styled.div`
  width: 868px;
  height: 155px;
  margin: 30px 0 24px;
  padding-top: 18px;
  border-radius: 17px;
  background: ${colors.notice};
  box-shadow: 0 1.5px 1px rgba(11, 20, 26, 0.1);
  display: flex;
  flex-direction: column;
  align-items: center;
`;

const NoticeLine = styled.div`
  display: flex;
  align-items: center;
  gap: 12px;
`;

const Card = styled.section`
  width: 970px;
  height: 741px;
  padding-top: 77px;
  border-radius: 70px;
  background: #fff;
  display: flex;
  flex-direction: column;
  align-items: center;
`;

const CardLine = styled.div`
  display: flex;
  align-items: center;
  margin-top: ${(p) => p.$top}px;
  padding-right: ${(p) => p.$after || 0}px;
  gap: ${(p) => p.$gap || 0}px;
`;

const Bubble = styled.article`
  position: relative;
  align-self: flex-start;
  width: ${(p) => p.$width}px;
  height: 186px;
  margin: ${(p) => p.$top}px 0 0 47px;
  padding: 10px 10px 11px;
  border-radius: 0 30px 30px 30px;
  background: #fff;
  box-shadow: 0 1.5px 1px rgba(11, 20, 26, 0.12);
`;

const Tail = styled.svg`
  position: absolute;
  top: 0;
  ${(p) => (p.$right ? 'right: -20px;' : 'left: -20px;')}
`;

const CallPanel = styled.div`
  height: 165px;
  border-radius: 22px;
  background: #f6f5f3;
  display: flex;
  padding: 28px 22px 0 22px;
`;

const CallIcon = styled.div`
  width: 110px;
  height: 110px;
  flex: none;
  margin-right: 22px;
  border-radius: 50%;
  background: #fff;
  display: flex;
  align-items: center;
  justify-content: center;
`;

const CallText = styled.div`
  flex: 1;
  margin-top: -6px;
`;

const CallDetail = styled.div`
  display: flex;
  justify-content: space-between;
  margin-top: -1px;
`;

const CallTime = styled.div`
  margin-top: 23px;
`;

const CallMessage = ({ top, width, icon, title, titleWidth, detail, detailWidth, time }) => (
  <Bubble $top={top} $width={width}>
    <Tail width='24' height='36' viewBox='0 0 24 36'>
      <path d='M24 0H3Q-1 1 1 5L20 33H24Z' fill='#fff' />
    </Tail>
    <CallPanel>
      <CallIcon>{icon}</CallIcon>
      <CallText>
        <FitText width={titleWidth} size={44} line={52} stroke={0.5} bold>
          {title}
        </FitText>
        <CallDetail>
          <FitText width={detailWidth} size={43} line={52} color={colors.muted}>
            {detail}
          </FitText>
          <CallTime>
            <FitText width={124} size={36} line={52} color={colors.muted} stroke={0.7}>
              {time}
            </FitText>
          </CallTime>
        </CallDetail>
      </CallText>
    </CallPanel>
  </Bubble>
);

const Outgoing = styled.article`
  position: relative;
  align-self: flex-end;
  width: 362px;
  height: 91px;
  margin: 28px 47px 28px 0;
  padding: 0 24px 0 26px;
  border-radius: 30px 0 30px 30px;
  background: ${colors.outgoing};
  box-shadow: 0 1.5px 1px rgba(11, 20, 26, 0.12);
  display: flex;
  justify-content: space-between;
`;

const OutgoingMeta = styled.div`
  display: flex;
  align-items: center;
  gap: 11px;
  margin-top: 34px;
  height: 50px;
`;

const OutgoingBody = styled.div`
  margin-top: 11px;
`;

const VideoCallIcon = () => (
  <svg width='47' height='38' viewBox='0 0 47 38'>
    <path d='M5 1H32Q37 1 37 6V16L44 9Q46 7 46 10V28Q46 31 44 29L37 22V32Q37 37 32 37H5Q0 37 0 32V6Q0 1 5 1Z' fill={colors.muted} />
    <path d='M26 12L12 25.500M11.500 16V26.500H21.500' fill='none' stroke='#fff' strokeWidth='3.800' strokeLinecap='round' strokeLinejoin='round' />
  </svg>
);

const MissedCallIcon = () => (
  <svg width='54' height='54' viewBox='0 0 24 24'>
    <path
      d='M3.900 3H8.600Q9.700 3 9.900 4.200L10.500 7.700Q10.600 8.500 10 9.100L7.600 11.400C9 13.900 10.900 15.800 13.300 17.200L15.600 14.800Q16.200 14.200 17 14.300L20 14.900Q21 15.200 21 16.200V20.200Q21 21 20 21C11 20.700 3.300 13 3 4Q3 3 3.900 3Z'
      fill={colors.missed}
    />
    <path d='M20.200 3.900L13.900 10M13.600 5.800V10.300H18.300' fill='none' stroke={colors.missed} strokeWidth='1.900' strokeLinecap='round' strokeLinejoin='round' />
  </svg>
);

const ShieldIcon = () => (
  <svg width='36' height='42' viewBox='0 0 36 42' fill='none' stroke={colors.green} strokeWidth='4' strokeLinejoin='round'>
    <path d='M18 2.500L33 7.500V20C33 30 26 36.500 18 39.500C10 36.500 3 30 3 20V7.500Z' />
    <path d='M18 19.500V29' strokeLinecap='round' />
    <circle cx='18' cy='13' r='2.300' fill={colors.green} stroke='none' />
  </svg>
);

/* ---------- bottom ---------- */

const Actions = styled.footer`
  height: 176px;
  display: grid;
  grid-template-columns: 1fr 1fr;
  background: #fff;
`;

const ActionButton = styled.div`
  display: flex;
  align-items: center;
  justify-content: center;
  gap: ${(p) => p.$gap}px;
  padding: 0 ${(p) => p.$after}px 2px 0;
`;

const NavBar = styled.nav`
  height: 116px;
  padding-left: 213px;
  display: grid;
  grid-template-columns: 306px 313px auto;
  align-items: center;
  background: ${colors.nav};
`;

const Screen = styled.div`
  width: 1080px;
  height: 2392px;
  overflow: hidden;
  background: #fff;
`;

export default function App() {
  return (
    <Screen>
      <GlobalStyle />
      <StatusBar />
      <Header />
      <Chat>
        <Wallpaper />
        <Thread>
          <Chip $width={145} $height={72}>
            <FitText width={95} size={35} line={60} color={colors.muted} track={2.5}>
              Today
            </FitText>
          </Chip>
          <Notice>
            <NoticeLine>
              <svg width='19' height='24' viewBox='0 0 19 24'>
                <path d='M4 10V7Q4 2 9.500 2Q15 2 15 7V10' fill='none' stroke={colors.muted} strokeWidth='2.400' />
                <rect x='0' y='8.500' width='19' height='15' rx='2' fill={colors.muted} />
                <circle cx='9.500' cy='16' r='2' fill={colors.notice} />
              </svg>
              <FitText width={773} size={38} line={39} color={colors.muted}>
                Messages and calls are end-to-end encrypted. Only
              </FitText>
            </NoticeLine>
            <FitText width={780} size={38} line={39} color={colors.muted}>
              people in this chat can read, listen to, or share them.
            </FitText>
            <FitText width={165} size={38} line={39} color={colors.muted} stroke={0.5} bold>
              Learn more
            </FitText>
          </Notice>
          <Card>
            <ServiceAvatar id='large' width={225} height={230} />
            <CardLine $top={32} $after={3}>
              <FitText width={58} size={47} line={60} stroke={1.1}>
                +91
              </FitText>
              <Spacer $size={14} />
              <Mosaic width={142} height={33} rows={cardCells} />
              <FitText width={75} size={47} line={60} stroke={1.1}>
                7071
              </FitText>
            </CardLine>
            <CardLine $top={10}>
              <FitText width={251} size={39} line={50} color={colors.muted}>
                ~ Customer Care
              </FitText>
            </CardLine>
            <CardLine $top={32}>
              <FitText width={585} size={42} line={52} color={colors.muted}>
                Not a contact <Bullet>•</Bullet> No common groups
              </FitText>
            </CardLine>
            <CardLine $top={39} $gap={30} $after={5}>
              <ShieldIcon />
              <FitText width={202} size={42} line={52} color={colors.green}>
                Safety tools
              </FitText>
            </CardLine>
          </Card>
          <CallMessage
            top={22}
            width={445}
            icon={<VideoCallIcon />}
            title='Video call'
            titleWidth={169}
            detail='4 min'
            detailWidth={90}
            time='12:43 PM'
          />
          <CallMessage
            top={29}
            width={622}
            icon={<MissedCallIcon />}
            title='Missed voice call'
            titleWidth={289}
            detail='Tap to call back'
            detailWidth={268}
            time='12:51 PM'
          />
          <Outgoing>
            <Tail $right width='24' height='34' viewBox='0 0 24 34'>
              <path d='M0 0H21Q25 1 22 5L3 31H0Z' fill={colors.outgoing} />
            </Tail>
            <OutgoingBody>
              <FitText width={109} size={48} line={60}>
                Fraud
              </FitText>
            </OutgoingBody>
            <OutgoingMeta>
              <FitText width={121} size={35} line={50} color='#4f6a57' stroke={0.7}>
                12:52 PM
              </FitText>
              <svg width='44' height='28' viewBox='0 0 44 28' fill='none' stroke='#4f6a57' strokeWidth='4'>
                <path d='M2 14.500L11.500 24.500L30 2M20 22L24.500 25.500L43 2' strokeLinejoin='round' />
              </svg>
            </OutgoingMeta>
          </Outgoing>
          <Chip $width={658} $height={76}>
            <FitText width={610} size={38} line={60} color={colors.muted}>
              You blocked this person. Tap to unblock.
            </FitText>
          </Chip>
        </Thread>
      </Chat>
      <Actions>
        <ActionButton $gap={31} $after={6}>
          <svg width='34' height='40' viewBox='0 0 34 40' fill='none' stroke={colors.red}>
            <path d='M4.500 7V37H29.500V7' strokeWidth='4.500' strokeLinejoin='round' />
            <path d='M0 5.500H34' strokeWidth='4.500' />
            <path d='M11 2.500H23' strokeWidth='4' />
            <path d='M13.500 13V29.500M20.500 13V29.500' strokeWidth='3.600' />
          </svg>
          <FitText width={184} size={42} line={56} color={colors.red}>
            Delete chat
          </FitText>
        </ActionButton>
        <ActionButton $gap={26} $after={8}>
          <svg width='42' height='42' viewBox='0 0 42 42' fill='none' stroke={colors.green} strokeWidth='4.400'>
            <circle cx='21' cy='21' r='18.500' />
            <path d='M8 8L34 34' />
          </svg>
          <FitText width={132} size={42} line={56} color={colors.green}>
            Unblock
          </FitText>
        </ActionButton>
      </Actions>
      <NavBar>
        <svg width='42' height='34' viewBox='0 0 42 34' fill={colors.navIcon}>
          <rect x='0.500' y='0' width='41' height='5.500' rx='2' />
          <rect x='0.500' y='14' width='41' height='5.500' rx='2' />
          <rect x='0.500' y='28' width='41' height='5.500' rx='2' />
        </svg>
        <svg width='42' height='42' viewBox='0 0 42 42' fill='none' stroke={colors.navIcon} strokeWidth='5'>
          <circle cx='21' cy='21' r='18' />
        </svg>
        <svg width='27' height='40' viewBox='0 0 27 40' fill='none' stroke={colors.navIcon} strokeWidth='5' strokeLinecap='round' strokeLinejoin='round'>
          <path d='M23.500 3L3.500 20L23.500 37' />
        </svg>
      </NavBar>
    </Screen>
  );
}
